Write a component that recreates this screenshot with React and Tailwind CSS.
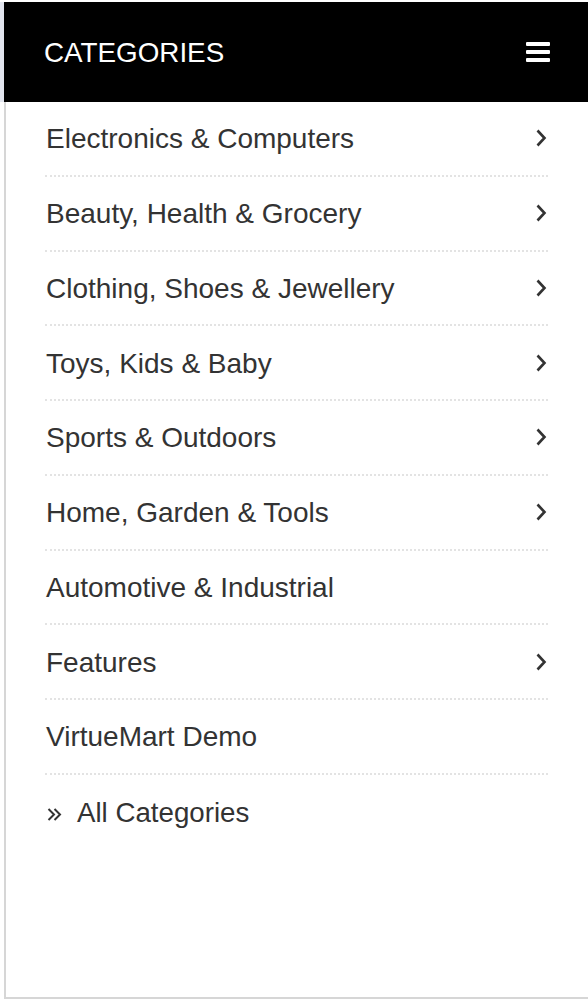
import React from 'react';

const categories = [
  { name: 'Electronics & Computers', sub: true },
  { name: 'Beauty, Health & Grocery', sub: true },
  { name: 'Clothing, Shoes & Jewellery', sub: true },
  { name: 'Toys, Kids & Baby', sub: true },
  { name: 'Sports & Outdoors', sub: true },
  { name: 'Home, Garden & Tools', sub: true },
  { name: 'Automotive & Industrial', sub: false },
  { name: 'Features', sub: true },
  { name: 'VirtueMart Demo', sub: false },
];

function Chevron() {
  return (
    <svg width="12" height="18" viewBox="0 0 12 18" className="shrink-0">
      <polyline points="2.5,1.5 9.5,9 2.5,16.5" fill="none" stroke="#333" strokeWidth="2.6" />
    </svg>
  );
}

function DoubleChevron() {
  return (
    <svg width="15" height="15" viewBox="0 0 15 15" className="shrink-0">
      <polyline points="1.5,2 7,7.5 1.5,13" fill="none" stroke="#333" strokeWidth="2" />
      <polyline points="7.5,2 13,7.5 7.5,13" fill="none" stroke="#333" strokeWidth="2" />
    </svg>
  );
}

export default function App() {
  return (
    <div className="w-[588px] h-[1006px] bg-white overflow-hidden" style={{ fontFamily: '"Liberation Sans", Arial, sans-serif' }}>
      <div className="flex pt-[2px]">
        <div className="w-[4px] h-[100px] bg-[#e2e5ee] shrink-0"></div>
        <div className="flex-1 flex flex-col h-[997px] border-l-2 border-b-2 border-[#d6d6d6]">
          <div className="h-[100px] -ml-[2px] bg-black flex items-center justify-between pl-[40px] pr-[38px]">
            <span className="text-white text-[27.8px] leading-none pt-[2px]">CATEGORIES</span>
            <div className="flex flex-col gap-[4.5px]">
              <span className="block w-[24px] h-[3.5px] bg-white rounded-[1px]"></span>
              <span className="block w-[24px] h-[3.5px] bg-white rounded-[1px]"></span>
              <span className="block w-[24px] h-[3.5px] bg-white rounded-[1px]"></span>
            </div>
          </div>
          <ul className="pl-[39px] pr-[40px]">
            {categories.map((c) => (
              <li
                key={c.name}
                className="h-[74.75px] flex items-center justify-between border-b-2 border-dotted border-[#e3e3e3] pr-[1px]"
              >
                <span className="text-[#333] text-[28px] leading-none pt-[2px] pl-[1px]">{c.name}</span>
                {c.sub && <Chevron />}
              </li>
            ))}
            <li className="h-[74px] flex items-center">
              <span className="ml-[2px] mr-[15px] mt-[5px] flex"><DoubleChevron /></span>
              <span className="text-[#333] text-[27.7px] leading-none pt-[2px]">All Categories</span>
            </li>
          </ul>
        </div>
      </div>
    </div>
  );
}
